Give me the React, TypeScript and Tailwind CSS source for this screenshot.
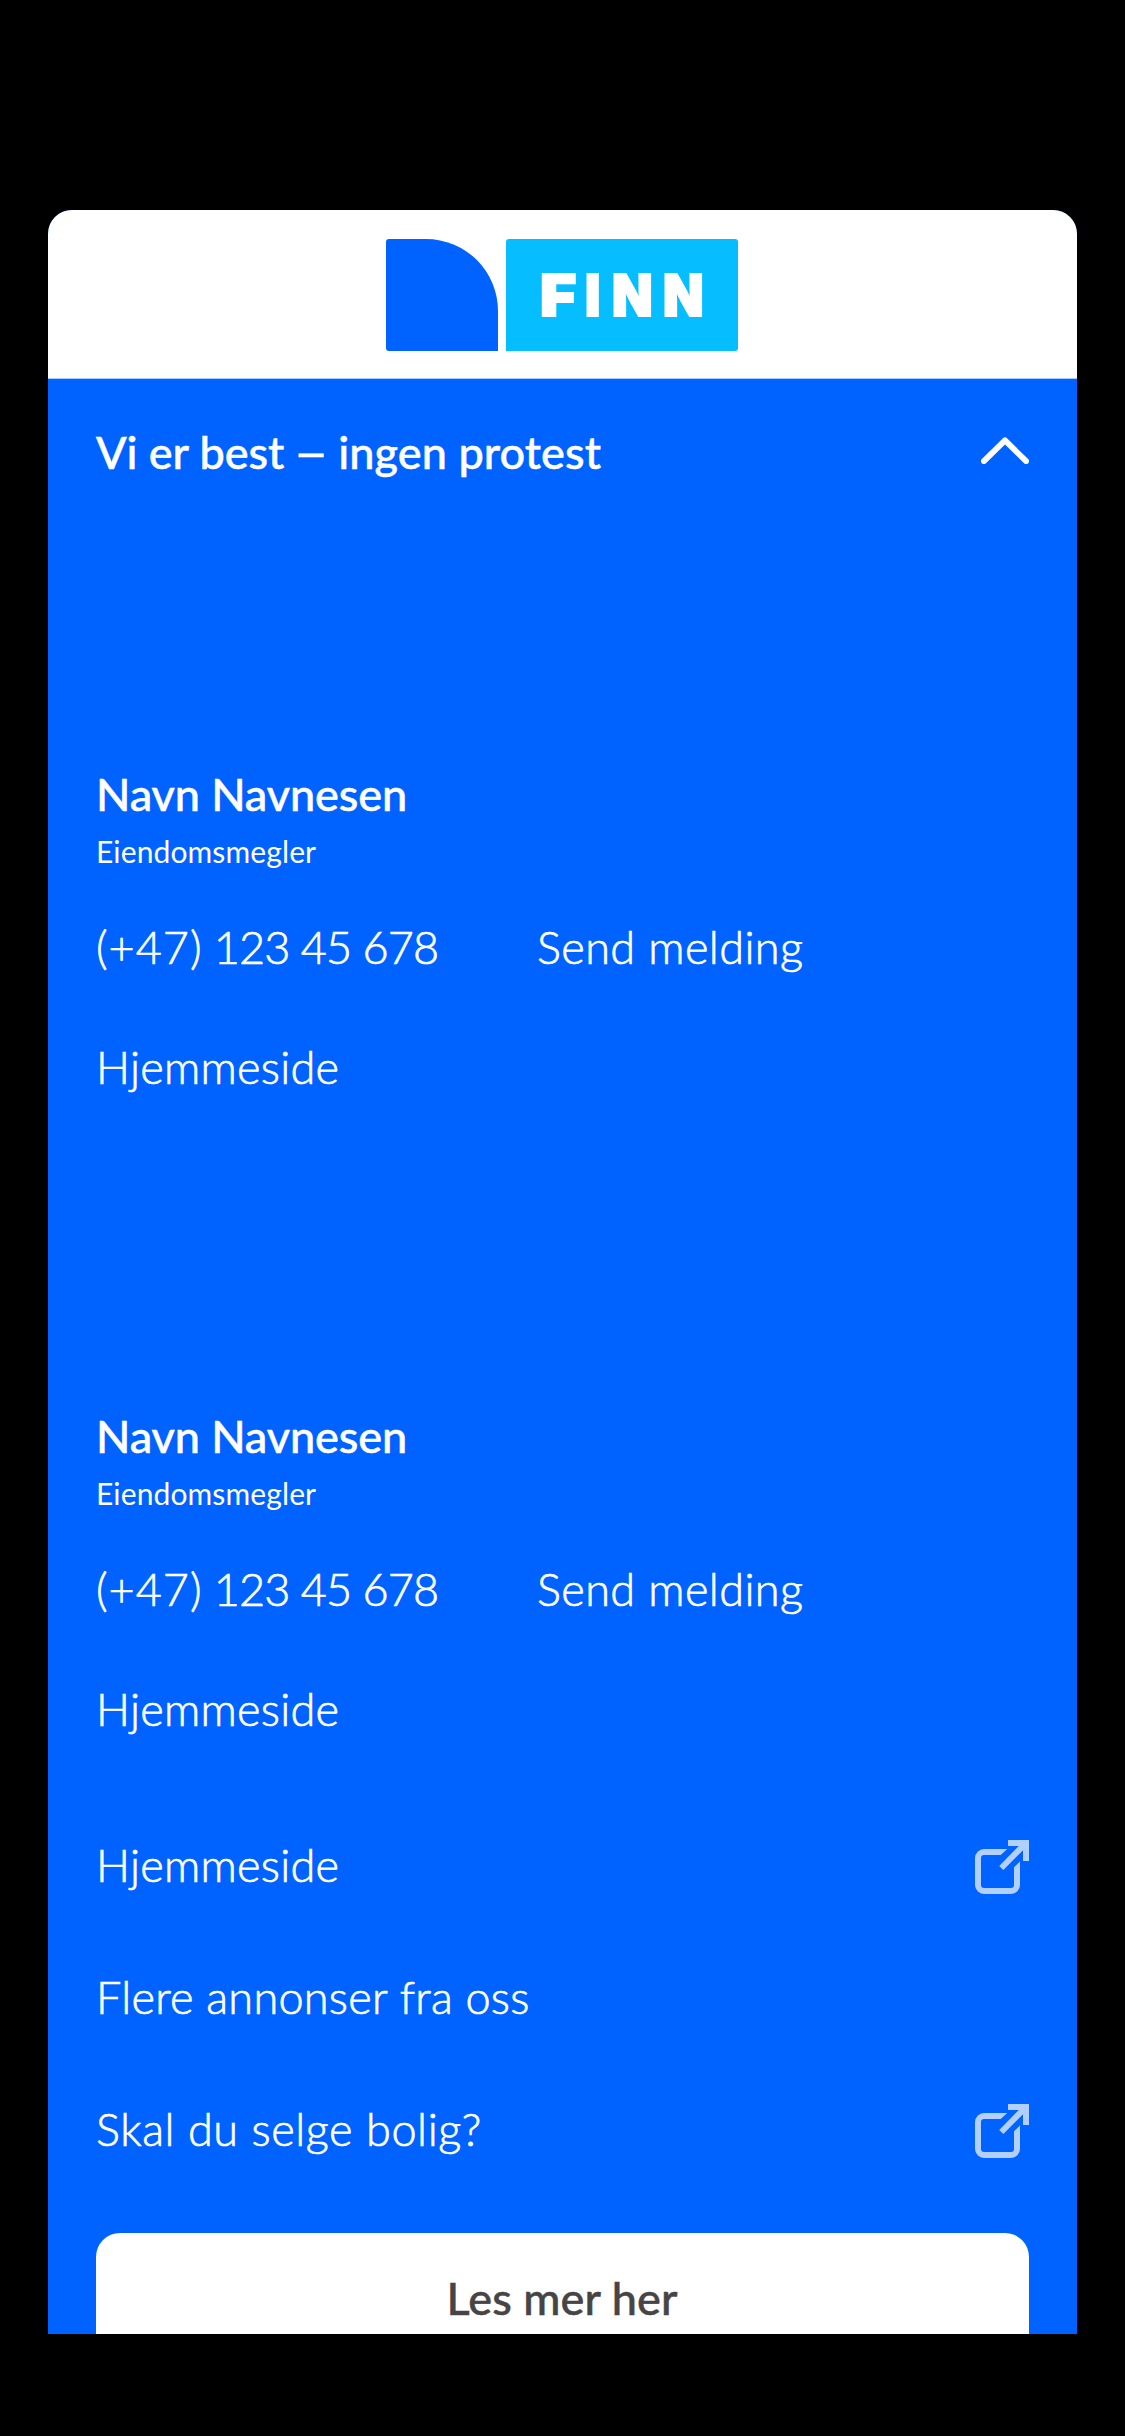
function Logo() {
  return (
    <div className="flex h-[112px] gap-[8px]" aria-label="FINN">
      <div className="w-[112px] rounded-[3px] rounded-tr-[72px] rounded-br-none bg-[#0063ff]" />
      <div className="flex w-[232px] rounded-[3px] rounded-bl-none bg-[#06beff] pt-[26px] pl-[34px] font-[Inter,sans-serif] text-[58px] leading-[60px] font-black text-white [-webkit-text-stroke:2px_white] [stroke-linejoin:round]">
        <span className="w-[45px] origin-left scale-x-[1.07]">F</span>
        <span className="w-[27px] origin-left scale-x-[0.91]">I</span>
        <span className="w-[51px] origin-left scale-x-[0.91]">N</span>
        <span className="origin-left scale-x-[0.91]">N</span>
      </div>
    </div>
  );
}

function ChevronUp() {
  return (
    <svg className="mt-[15px] h-[27px] w-[48px]" viewBox="0 0 48 27" fill="none" stroke="white" strokeWidth="5.8" strokeLinecap="round" strokeLinejoin="round">
      <path d="M2.9 24.1 24 3.4l21.1 20.7" />
    </svg>
  );
}

function ExternalLink() {
  return (
    <svg className="mt-[5px] h-[54px] w-[54px]" viewBox="0 0 54 54" fill="#b2d0ff">
      <path d="M32.3 9H9a9 9 0 0 0-9 9v27a9 9 0 0 0 9 9h27a9 9 0 0 0 9-9V21.5l-6 5.7V45a3 3 0 0 1-3 3H9a3 3 0 0 1-3-3V18a3 3 0 0 1 3-3h16.7z" />
      <path d="M33 0h21v21h-6V10.2L28.3 30l-4.1-4.1L43.8 6H33z" />
    </svg>
  );
}

function Agent() {
  return (
    <section>
      <h2 className="font-medium tracking-[-0.1px] [-webkit-text-stroke:0.5px_white]">Navn Navnesen</h2>
      <p className="mt-[7px] text-[30px] leading-[40px] tracking-[0.12px]">Eiendomsmegler</p>
      <div className="mt-[46px] flex font-light [-webkit-text-stroke:0.7px_white]">
        <a className="w-[441px] tracking-[-0.9px]">
          <span className="tracking-[1px]">(+47)</span> 123 45 678
        </a>
        <a className="tracking-[0.43px]">Send melding</a>
      </div>
      <a className="mt-[60px] block font-light tracking-[0.29px] [-webkit-text-stroke:0.7px_white]">Hjemmeside</a>
    </section>
  );
}

export default function App() {
  return (
    <div className="h-[2436px] w-[1125px] bg-black px-[48px] pt-[210px] font-[Lato,sans-serif]">
      <main className="flex h-[2124px] flex-col overflow-hidden rounded-t-[24px] bg-[#0063ff] text-[45px] leading-[60px] text-white">
        <header className="flex h-[169px] shrink-0 justify-center border-b border-[#a6c9ff] bg-white pt-[29px] pr-[2px]">
          <Logo />
        </header>
        <div className="px-[48px] pt-[43px]">
          <div className="flex justify-between">
            <h1 className="font-medium tracking-[-0.05px] whitespace-nowrap [-webkit-text-stroke:0.5px_white]">
              Vi er best
              <span className="inline-block w-[54px] scale-x-[1.35] text-center">–</span>
              <span className="tracking-[0.1px]">ingen protest</span>
            </h1>
            <ChevronUp />
          </div>
          <div className="mt-[282px] flex flex-col gap-[309px]">
            <Agent />
            <Agent />
          </div>
          <nav className="mt-[96px] flex flex-col gap-[72px] font-light [-webkit-text-stroke:0.7px_white]">
            <a className="flex h-[60px] justify-between tracking-[0.29px]">
              Hjemmeside
              <ExternalLink />
            </a>
            <a className="h-[60px] tracking-[0.27px]">Flere annonser fra oss</a>
            <a className="flex h-[60px] justify-between tracking-[0.6px]">
              Skal du selge bolig?
              <ExternalLink />
            </a>
          </nav>
          <button className="mt-[74px] h-[132px] w-full rounded-[24px] bg-white pr-[1px] pb-[2px] font-medium tracking-[0.12px] text-[#474445] [-webkit-text-stroke:0.5px_#474445]">Les mer her</button>
        </div>
      </main>
    </div>
  );
}
